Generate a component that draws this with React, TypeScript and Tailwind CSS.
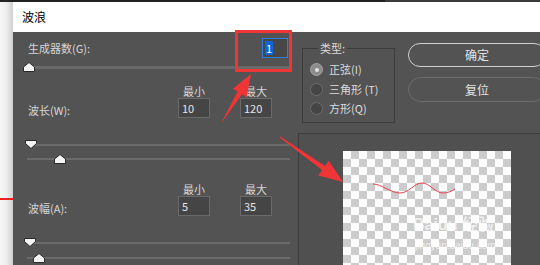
import React from "react";

const font = { fontFamily: '"Noto Sans CJK SC", "Liberation Sans", sans-serif' };

function ThumbUp({ x }: { x: number }) {
  return (
    <svg className="absolute top-0" style={{ left: x }} width="12" height="10" viewBox="0 0 12 10">
      <path d="M6 0.5 L11.5 5 L11.5 9.5 L0.5 9.5 L0.5 5 Z" fill="#f4f4f4" stroke="#2a2a2a" strokeWidth="1" />
    </svg>
  );
}

function ThumbDown({ x }: { x: number }) {
  return (
    <svg className="absolute top-0" style={{ left: x }} width="12" height="9" viewBox="0 0 12 9">
      <path d="M0.5 0.5 L11.5 0.5 L11.5 3.5 L6 8.5 L0.5 3.5 Z" fill="#f4f4f4" stroke="#2a2a2a" strokeWidth="1" />
    </svg>
  );
}

function Slider({ thumb, x, mt, track = 2 }: { thumb: "up" | "down"; x: number; mt: string; track?: number }) {
  return (
    <div className={`relative h-[10px] ${mt} flex items-center pl-[14px] pr-[8px]`}>
      <div className="w-full bg-[#6a6a6a]" style={{ height: track }} />
      {thumb === "up" ? <ThumbUp x={x} /> : <ThumbDown x={x} />}
    </div>
  );
}

function Field({ v }: { v: string }) {
  return (
    <div className="h-[20px] w-[32px] bg-[#454545] border border-[#6a6a6a] text-[11px] text-[#e6e6e6] pl-[3px] leading-[18px]">
      {v}
    </div>
  );
}

function MinMax({ label, a, b, mt }: { label: string; a: string; b: string; mt: string }) {
  return (
    <div className={`flex ${mt} pl-[15px]`}>
      <div className="w-[150px] flex items-end">
        <div className="h-[20px] flex items-center pt-[4px] text-[11px] text-[#d6d6d6]">{label}</div>
      </div>
      <div className="flex flex-col items-center w-[32px]">
        <div className="h-[14px] text-[11px] leading-[14px] text-[#d6d6d6]">最小</div>
        <Field v={a} />
      </div>
      <div className="flex flex-col items-center w-[32px] ml-[30px]">
        <div className="h-[14px] text-[11px] leading-[14px] text-[#d6d6d6]">最大</div>
        <Field v={b} />
      </div>
    </div>
  );
}

function Radio({ label, on }: { label: string; on?: boolean }) {
  return (
    <div className="flex items-center h-[13px]">
      {on ? (
        <div className="w-[13px] h-[13px] rounded-full bg-[#8c8c8c] border border-[#a4a4a4] flex items-center justify-center">
          <div className="w-[4px] h-[4px] rounded-full bg-[#e4e4e4]" />
        </div>
      ) : (
        <div className="w-[13px] h-[13px] rounded-full bg-[#454545] border border-[#6c6c6c]" />
      )}
      <span className="ml-[6px] text-[11px] text-[#dcdcdc] whitespace-nowrap">{label}</span>
    </div>
  );
}

export default function App() {
  return (
    <div className="w-[540px] h-[265px] overflow-hidden flex flex-col relative" style={font}>
      <div className="h-[2px] flex shrink-0">
        <div className="w-[385px] bg-[#222222]" />
        <div className="flex-1 bg-[#3c3c3c]" />
      </div>
      <div className="flex flex-1 min-h-0">
        <div className="w-[13px] shrink-0 bg-gradient-to-r from-[#f6f6f6] via-[#eeeeee] to-[#cfcfcf] flex flex-col">
          <div className="mt-[196px] h-[2px] bg-[#ee2020]" />
        </div>
        <div className="flex-1 flex flex-col min-w-0">
          <div className="h-[30px] shrink-0 bg-white flex items-center pl-[9px] text-[12px] text-black">波浪</div>
          <div className="flex-1 bg-[#535353] flex min-h-0">
            {/* left column */}
            <div className="w-[285px] shrink-0 flex flex-col">
              <div className="mt-[6px] h-[20px] flex items-center pl-[15px] pr-[10px]">
                <span className="text-[11px] text-[#d6d6d6]">生成器数(G):</span>
                <div className="ml-auto h-[20px] w-[26px] bg-[#474747] border border-[#2f7fe0] flex items-center pl-[2px]">
                  <span className="bg-[#0f66d8] text-white text-[11px] leading-[14px] px-[1px]">1</span>
                </div>
              </div>
              <Slider thumb="up" x={10} mt="mt-[4px]" track={3} />
              <MinMax label="波长(W):" a="10" b="120" mt="mt-[12px]" />
              <Slider thumb="down" x={12} mt="mt-[22px]" />
              <Slider thumb="up" x={41} mt="mt-[4px]" />
              <MinMax label="波幅(A):" a="5" b="35" mt="mt-[18px]" />
              <Slider thumb="down" x={11} mt="mt-[22px]" />
              <Slider thumb="up" x={20} mt="mt-[5px]" />
            </div>
            {/* right part */}
            <div className="flex-1 flex flex-col min-w-0">
              <div className="h-[101px] shrink-0 flex">
                <div className="relative shrink-0 ml-[4px] mt-[16px] w-[93px] h-[75px] border border-[#3c3c3c] flex flex-col pl-[7px] pt-[14px] gap-[6.5px]">
                  <span className="absolute -top-[8px] left-[15px] px-[2px] bg-[#535353] text-[11px] leading-[14px] text-[#dcdcdc]">类型:</span>
                  <Radio label="正弦(I)" on />
                  <Radio label="三角形 (T)" />
                  <Radio label="方形(Q)" />
                </div>
                <div className="shrink-0 ml-[13px] mt-[11px] flex flex-col gap-[10px]">
                  <div className="w-[138px] h-[24px] rounded-full border-[1.5px] border-[#cfcfcf] flex items-center justify-center text-[12px] text-[#e4e4e4]">确定</div>
                  <div className="w-[138px] h-[25px] rounded-full border-[1.5px] border-[#6c6c6c] flex items-center justify-center text-[12px] text-[#e4e4e4]">复位</div>
                </div>
              </div>
              <div className="flex-1 border-l border-t border-[#3e3e3e] bg-[#505050] flex min-h-0">
                <div className="relative shrink-0 ml-[44px] mt-[17px] w-[168px] h-[140px] bg-[image:repeating-conic-gradient(#cccccc_0%_25%,#ffffff_0%_50%)] bg-[length:16px_16px] overflow-hidden">
                  <svg className="absolute left-0 top-0" width="168" height="120" viewBox="0 0 168 120">
                    <path d="M30 33 C38 33 48 42 57 42 C66 42 71 32 79 32 C87 32 92 42 100 42 C105 42 109 40 112 38" fill="none" stroke="#e8404e" strokeWidth="1" />
                  </svg>
                  <div className="absolute left-[70px] top-[66px] text-[16px] font-bold text-white/70 leading-none whitespace-nowrap" style={{ fontFamily: '"Liberation Sans", "Noto Sans CJK SC", sans-serif' }}>
                    Baidu 经验
                  </div>
                  <div className="absolute left-[72px] top-[89px] text-[10px] leading-[12px] text-white/70 whitespace-nowrap" style={{ fontFamily: '"Liberation Sans", sans-serif' }}>
                    jingyan.baidu.com
                  </div>
                </div>
              </div>
            </div>
          </div>
        </div>
      </div>

      {/* annotations */}
      <div className="absolute left-[235px] top-[30px] w-[57px] h-[42px] border-[3px] border-[#ef3535]" />
      <svg className="absolute left-0 top-0 pointer-events-none" width="540" height="265" viewBox="0 0 540 265">
        <polygon points="221.6,122.3 222.4,121.7 242,94.2 246.7,97 251,74 232.9,88.8 237.6,91.6" fill="#ef3535" />
        <polygon points="279.7,137.4 280.3,136.6 325,166.1 328.7,160.8 343,182 318.3,175.4 322,170.1" fill="#ef3535" />
      </svg>
    </div>
  );
}
